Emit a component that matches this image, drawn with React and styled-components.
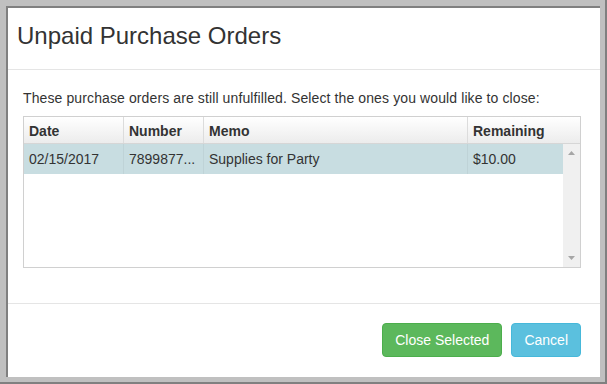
import React from 'react';
import styled, { createGlobalStyle } from 'styled-components';

const Global = createGlobalStyle`
  html, body { margin: 0; padding: 0; }
  body {
    font-family: "Liberation Sans", Arial, Helvetica, sans-serif;
    color: #333;
    background: #c0c0c0;
  }
  * { box-sizing: border-box; }
`;

const Frame = styled.div`
  width: 607px;
  height: 384px;
  background: #c0c0c0;
  border-right: 2px solid #808080;
  border-bottom: 2px solid #808080;
  padding: 6px 5px 5px 6px;
  display: flex;
`;

const Modal = styled.div`
  flex: 1;
  display: flex;
  flex-direction: column;
  background: #fff;
  border-top: 2px solid #808080;
  border-left: 2px solid #808080;
`;

const Header = styled.div`
  height: 62px;
  padding: 15px 10px 0 9px;
  border-bottom: 1px solid #e5e5e5;
`;

const Title = styled.h4`
  margin: 0;
  font-size: 24px;
  line-height: 26.4px;
  font-weight: normal;
  color: #333;
`;

const Body = styled.div`
  flex: 1;
  padding: 18px 19px 0 15px;
  border-bottom: 1px solid #e5e5e5;
`;

const Intro = styled.p`
  margin: 0;
  font-size: 14px;
  line-height: 20px;
  letter-spacing: 0.11px;
  color: #333;
`;

const Grid = styled.div`
  margin-top: 8px;
  border: 1px solid #d0d0d0;
  width: 558px;
`;

const GridHead = styled.div`
  display: flex;
  height: 27px;
  background: linear-gradient(#ffffff, #ececec);
  border-bottom: 1px solid #d6d6d6;
`;

const HeadCell = styled.div`
  flex: ${p => (p.$w ? `0 0 ${p.$w}px` : '1')};
  padding: 4px 5px 0;
  font-size: 14px;
  line-height: 20px;
  font-weight: bold;
  color: #333;
  border-right: ${p => (p.$last ? 'none' : '1px solid #dcdcdc')};
  white-space: nowrap;
  overflow: hidden;
`;

const GridBody = styled.div`
  display: flex;
  height: 123px;
`;

const Rows = styled.div`
  flex: 1;
`;

const Row = styled.div`
  display: flex;
  height: 30px;
  background: ${p => (p.$selected ? '#c8dde1' : '#fff')};
`;

const Cell = styled.div`
  flex: ${p => (p.$w ? `0 0 ${p.$w}px` : '1')};
  padding: 5px 5px 0;
  font-size: 14px;
  line-height: 20px;
  color: #333;
  border-right: ${p => (p.$last ? 'none' : '1px solid rgba(0,0,0,0.045)')};
  white-space: nowrap;
  overflow: hidden;
`;

const Scrollbar = styled.div`
  flex: 0 0 17px;
  background: #f0f0f0;
  display: flex;
  flex-direction: column;
  justify-content: space-between;
  align-items: center;
  padding: 7px 0 7px;
`;

const Footer = styled.div`
  height: 73px;
  display: flex;
  justify-content: flex-end;
  align-items: flex-start;
  gap: 9px;
  padding: 19px 19px 0;
`;

const Button = styled.button`
  font-family: inherit;
  font-size: 14px;
  line-height: 20px;
  padding: 6px 12px;
  border-radius: 4px;
  color: #fff;
  cursor: pointer;
  border: 1px solid ${p => (p.$variant === 'success' ? '#4cae4c' : '#46b8da')};
  background: ${p => (p.$variant === 'success' ? '#5cb85c' : '#5bc0de')};
`;

const Arrow = ({ down }) => (
  <svg width="7" height="4" viewBox="0 0 7 4">
    <polygon points={down ? '0,0 7,0 3.5,4' : '0,4 7,4 3.5,0'} fill="#a6a6a6" />
  </svg>
);

const columns = [
  { key: 'date', label: 'Date', w: 100 },
  { key: 'number', label: 'Number', w: 80 },
  { key: 'memo', label: 'Memo', w: 264 },
  { key: 'remaining', label: 'Remaining' },
];

const rows = [
  { date: '02/15/2017', number: '7899877...', memo: 'Supplies for Party', remaining: '$10.00', selected: true },
];

export default function App() {
  return (
    <>
      <Global />
      <Frame>
        <Modal>
          <Header>
            <Title>Unpaid Purchase Orders</Title>
          </Header>
          <Body>
            <Intro>These purchase orders are still unfulfilled. Select the ones you would like to close:</Intro>
            <Grid>
              <GridHead>
                {columns.map((c, i) => (
                  <HeadCell key={c.key} $w={c.w} $last={i === columns.length - 1}>
                    {c.label}
                  </HeadCell>
                ))}
              </GridHead>
              <GridBody>
                <Rows>
                  {rows.map((r, ri) => (
                    <Row key={ri} $selected={r.selected}>
                      {columns.map((c, i) => (
                        <Cell key={c.key} $w={c.w} $last={i === columns.length - 1}>
                          {r[c.key]}
                        </Cell>
                      ))}
                    </Row>
                  ))}
                </Rows>
                <Scrollbar>
                  <Arrow />
                  <Arrow down />
                </Scrollbar>
              </GridBody>
            </Grid>
          </Body>
          <Footer>
            <Button $variant="success">Close Selected</Button>
            <Button $variant="info">Cancel</Button>
          </Footer>
        </Modal>
      </Frame>
    </>
  );
}
